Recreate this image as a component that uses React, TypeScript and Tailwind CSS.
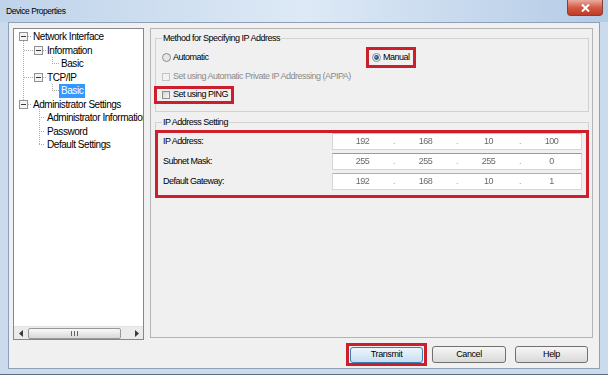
import React from "react";

const FONT = "font-['Liberation_Sans',Arial,sans-serif]";

interface TreeRow {
  label: string;
  indent: string;
  selected?: boolean;
}

const treeRows: TreeRow[] = [
  { label: "Network Interface", indent: "pl-[17px]" },
  { label: "Information", indent: "pl-[31px]" },
  { label: "Basic", indent: "pl-[45px]" },
  { label: "TCP/IP", indent: "pl-[31px]" },
  { label: "Basic", indent: "pl-[45px]", selected: true },
  { label: "Administrator Settings", indent: "pl-[17px]" },
  { label: "Administrator Information", indent: "pl-[31px]" },
  { label: "Password", indent: "pl-[31px]" },
  { label: "Default Settings", indent: "pl-[31px]" },
];

const ipRows = [
  { label: "IP Address:", value: ["192", "168", "10", "100"], top: "border-t-[#c4c4c4]" },
  { label: "Subnet Mask:", value: ["255", "255", "255", "0"], top: "border-t-[#9a9a9a]" },
  { label: "Default Gateway:", value: ["192", "168", "10", "1"], top: "border-t-[#b0b0b0]" },
];

function Expander({ cx, cy }: { cx: number; cy: number }) {
  return (
    <g>
      <rect x={cx - 3.5} y={cy - 3.5} width={8} height={8} fill="#f3f3f3" stroke="#929292" />
      <line x1={cx - 2} x2={cx + 3} y1={cy + 0.5} y2={cy + 0.5} stroke="#3a3a3a" />
    </g>
  );
}

function TreeLines() {
  const dot = { stroke: "#a9a9a9", strokeDasharray: "1 1" };
  return (
    <svg className="absolute left-0 top-0 pointer-events-none" width="129" height="130">
      {/* root level */}
      <line x1={14} x2={18} y1={7.5} y2={7.5} {...dot} />
      <line x1={9.5} x2={9.5} y1={12} y2={71} {...dot} />
      <line x1={10} x2={20} y1={21.5} y2={21.5} {...dot} />
      <line x1={10} x2={20} y1={48.5} y2={48.5} {...dot} />
      <line x1={14} x2={18} y1={75.5} y2={75.5} {...dot} />
      {/* Information / TCP/IP */}
      <line x1={29} x2={32} y1={21.5} y2={21.5} {...dot} />
      <line x1={29} x2={32} y1={48.5} y2={48.5} {...dot} />
      <line x1={38.5} x2={38.5} y1={28} y2={35} {...dot} />
      <line x1={38} x2={45} y1={34.5} y2={34.5} {...dot} />
      <line x1={38.5} x2={38.5} y1={55} y2={62} {...dot} />
      <line x1={38} x2={45} y1={61.5} y2={61.5} {...dot} />
      {/* Administrator Settings children */}
      <line x1={25.5} x2={25.5} y1={80} y2={116} {...dot} />
      <line x1={25} x2={31} y1={88.5} y2={88.5} {...dot} />
      <line x1={25} x2={31} y1={102.5} y2={102.5} {...dot} />
      <line x1={25} x2={31} y1={115.5} y2={115.5} {...dot} />
      <Expander cx={9} cy={7} />
      <Expander cx={9} cy={75} />
      <Expander cx={24} cy={21} />
      <Expander cx={24} cy={48} />
    </svg>
  );
}

function Radio({ checked }: { checked?: boolean }) {
  return (
    <svg width="9" height="9" viewBox="0 0 9 9" className="shrink-0">
      <circle cx="4.5" cy="4.5" r="4" fill={checked ? "#eef1f4" : "#e6e6e6"} stroke="#8c8c8c" />
      {checked && <circle cx="4.5" cy="4.5" r="2.4" fill="#27578d" />}
      {checked && <circle cx="4" cy="4" r="0.9" fill="#7fa8d4" />}
    </svg>
  );
}

function Check({ disabled }: { disabled?: boolean }) {
  return (
    <span
      className={
        disabled
          ? "shrink-0 w-[8px] h-[8px] border border-[#c4c4c4] bg-[#f2f2f2]"
          : "shrink-0 w-[8px] h-[8px] border border-[#8e8e8e] bg-gradient-to-br from-[#d4d4d4] to-[#f8f8f8]"
      }
    />
  );
}

function ScrollBar() {
  return (
    <div className="h-[13px] flex items-center bg-[#ebebeb] border-t border-[#e2e2e2]">
      <div className="w-[13px] h-full flex items-center justify-center">
        <svg width="4" height="7" viewBox="0 0 4 7">
          <path d="M4 0 L0 3.5 L4 7 Z" fill="#3b3b3b" />
        </svg>
      </div>
      <div className="ml-px w-[93px] h-[11px] rounded-[2px] border border-[#989898] bg-gradient-to-b from-[#f9f9f9] to-[#d8d8d8] flex items-center justify-center">
        <svg width="7" height="5" viewBox="0 0 7 5">
          <path d="M0.5 0 V5 M3.5 0 V5 M6.5 0 V5" stroke="#666" />
        </svg>
      </div>
      <div className="flex-1" />
      <div className="w-[13px] h-full flex items-center justify-center">
        <svg width="4" height="7" viewBox="0 0 4 7">
          <path d="M0 0 L4 3.5 L0 7 Z" fill="#3b3b3b" />
        </svg>
      </div>
    </div>
  );
}

export default function App() {
  return (
    <div
      className={`w-[608px] h-[375px] overflow-hidden flex flex-col bg-[#cbdaec] border-b border-[#5f6c7e] text-black ${FONT}`}
    >
      {/* Title bar */}
      <div className="h-[22px] shrink-0 flex justify-between bg-gradient-to-r from-[#bfd3ea] via-[#dde9f6] to-[#b4cbe6]">
        <span className="pl-[6px] self-center text-[8.5px] tracking-[-0.45px] leading-none">Device Properties</span>
        <div className="mr-[5px] w-[36px] h-[16px] rounded-b-[4px] border border-t-0 border-[#874035] bg-gradient-to-b from-[#e9aa9f] via-[#d45a43] to-[#bf3a28] flex items-center justify-center">
          <svg width="9" height="8" viewBox="0 0 9 8">
            <path d="M1 0.5 L8 7.5 M8 0.5 L1 7.5" stroke="#ffffff" strokeWidth="2" />
          </svg>
        </div>
      </div>

      {/* Client area */}
      <div className="flex-1 mx-[8px] mb-[5px] border border-[#8da0b8] bg-[#f0f0f0] flex flex-col pl-[4px] pr-[6px] pt-[5px] pb-[2px]">
        <div className="flex items-start gap-[6px] h-[312px]">
          {/* Tree */}
          <div className="w-[131px] h-[312px] border border-[#828790] bg-white flex flex-col">
            <div className="relative flex-1 overflow-hidden pt-px text-[10px] tracking-[-0.45px]">
              <TreeLines />
              {treeRows.map((row, i) => (
                <div key={i} className={`h-[13.5px] leading-[13.5px] whitespace-nowrap ${row.indent}`}>
                  <span className={row.selected ? "px-[2px] bg-[#3399ff] text-white inline-block h-[14px]" : "px-[2px]"}>
                    {row.label}
                  </span>
                </div>
              ))}
            </div>
            <ScrollBar />
          </div>

          {/* Property page */}
          <div className="w-[443px] h-[310px] border border-[#b4b4b4] pl-[4px] pr-[3px] pt-[3px] text-[9px] tracking-[-0.5px]">
            <fieldset className="border border-[#d2d2d2] px-[6px] pb-[7px]">
              <legend className="px-[1px] leading-[12px]">Method for Specifying IP Address</legend>
              <div className="mt-[3px] flex items-center h-[21px]">
                <div className="w-[204px] flex items-center gap-[2px]">
                  <Radio />
                  <span>Automatic</span>
                </div>
                <div className="h-[21px] border-[3px] border-[#cc1f2b] pl-[3px] pr-[3px] flex items-center gap-[2px]">
                  <Radio checked />
                  <span>Manual</span>
                </div>
              </div>
              <div className="mt-[2px] h-[14px] flex items-center gap-[3px] text-[#8b8b8b]">
                <Check disabled />
                <span>Set using Automatic Private IP Addressing (APIPA)</span>
              </div>
              <div className="mt-[2px] -ml-[8px] w-fit h-[18px] border-[3px] border-[#cc1f2b] pl-[5px] pr-[3px] flex items-center gap-[3px]">
                <Check />
                <span>Set using PING</span>
              </div>
            </fieldset>

            <fieldset className="mt-[4px] border border-[#d2d2d2]">
              <legend className="ml-[6px] px-[1px] leading-[12px]">IP Address Setting</legend>
              <div className="mt-[2px] -mx-px -mb-px border-[3px] border-[#cc1f2b] pl-[5px] pr-[4px] pb-[5px] flex flex-col gap-[3px]">
                {ipRows.map((row) => (
                  <div key={row.label} className="h-[17px] flex items-center">
                    <span className="w-[169px]">{row.label}</span>
                    <div
                      className={`w-[250px] h-[17px] bg-white border border-[#d6d6d6] ${row.top} grid grid-cols-[1fr_4px_1fr_4px_1fr_4px_1fr] items-center text-center text-[#6a6a6a]`}
                    >
                      {row.value.map((part, i) => (
                        <React.Fragment key={i}>
                          <span className="blur-[0.7px]">{part}</span>
                          {i < 3 && <span className="text-[#9a9a9a]">.</span>}
                        </React.Fragment>
                      ))}
                    </div>
                  </div>
                ))}
              </div>
            </fieldset>
          </div>
        </div>

        {/* Buttons */}
        <div className="mt-[3px] flex justify-end items-center pr-[5px] text-[9px] tracking-[-0.4px]">
          <div className="h-[23px] border-[3px] border-[#cc1f2b] px-px flex items-center">
            <button className="w-[73px] h-[16px] rounded-[3px] border border-[#3c7fb1] bg-gradient-to-b from-[#eef6fc] to-[#c6def3] leading-none">
              Transmit
            </button>
          </div>
          <button className="ml-[5px] w-[74px] h-[17px] rounded-[3px] border border-[#707070] bg-gradient-to-b from-[#f6f6f6] to-[#d9d9d9] leading-none">
            Cancel
          </button>
          <button className="ml-[9px] w-[73px] h-[17px] rounded-[3px] border border-[#707070] bg-gradient-to-b from-[#f6f6f6] to-[#d9d9d9] leading-none">
            Help
          </button>
        </div>
      </div>
    </div>
  );
}
